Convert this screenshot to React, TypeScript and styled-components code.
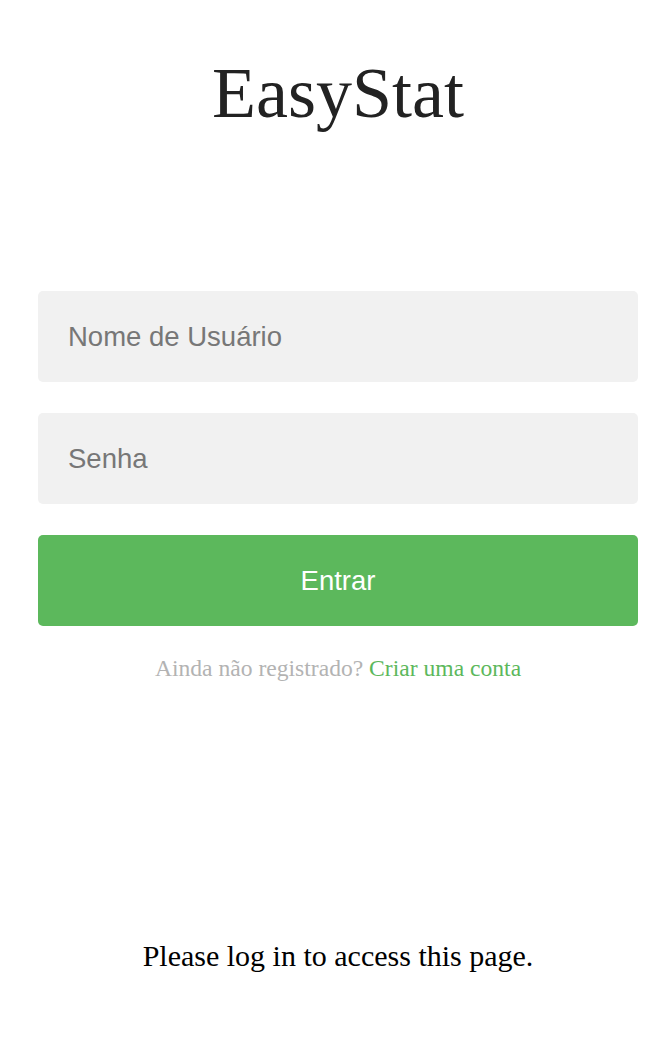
import React from "react";
import styled, { createGlobalStyle } from "styled-components";

const Global = createGlobalStyle`
  html, body { margin: 0; padding: 0; background: #ffffff; }
  body { font-family: "Liberation Serif", "Times New Roman", serif; }
`;

const Page = styled.div`
  display: flex;
  flex-direction: column;
  align-items: stretch;
  padding: 52px 31px 0 38px;
`;

const Title = styled.h1`
  margin: 0;
  font-family: "Liberation Serif", "Times New Roman", serif;
  font-weight: 400;
  font-size: 72px;
  line-height: normal;
  color: #222222;
  text-align: center;
`;

const Form = styled.form`
  margin-top: 156px;
  display: flex;
  flex-direction: column;
  gap: 31px;
`;

const Field = styled.input`
  box-sizing: border-box;
  width: 100%;
  height: 91px;
  border: none;
  border-radius: 5px;
  background: #f1f1f1;
  padding: 0 30px;
  font-family: "Liberation Sans", Arial, sans-serif;
  font-size: 27.5px;
  color: #333;
  outline: none;
  &::placeholder { color: #777777; }
`;

const Submit = styled.button`
  box-sizing: border-box;
  width: 100%;
  height: 91px;
  border: none;
  border-radius: 5px;
  background: #5cb85c;
  color: #ffffff;
  font-family: "Liberation Sans", Arial, sans-serif;
  font-size: 27.5px;
  cursor: pointer;
`;

const Note = styled.p`
  margin: 29px 0 0;
  text-align: center;
  font-family: "Liberation Serif", "Times New Roman", serif;
  font-size: 23.6px;
  line-height: normal;
  color: #b3b3b3;
`;

const Link = styled.a`
  color: #5cb85c;
  text-decoration: none;
`;

const Footer = styled.p`
  margin: 257px 0 0;
  text-align: center;
  font-family: "Liberation Serif", "Times New Roman", serif;
  font-size: 30px;
  line-height: normal;
  color: #000000;
`;

export default function App() {
  return (
    <>
      <Global />
      <Page>
        <Title>EasyStat</Title>
        <Form onSubmit={(e) => e.preventDefault()}>
          <Field type="text" placeholder="Nome de Usuário" />
          <Field type="password" placeholder="Senha" />
          <Submit type="submit">Entrar</Submit>
        </Form>
        <Note>
          Ainda não registrado? <Link href="#">Criar uma conta</Link>
        </Note>
        <Footer>Please log in to access this page.</Footer>
      </Page>
    </>
  );
}
